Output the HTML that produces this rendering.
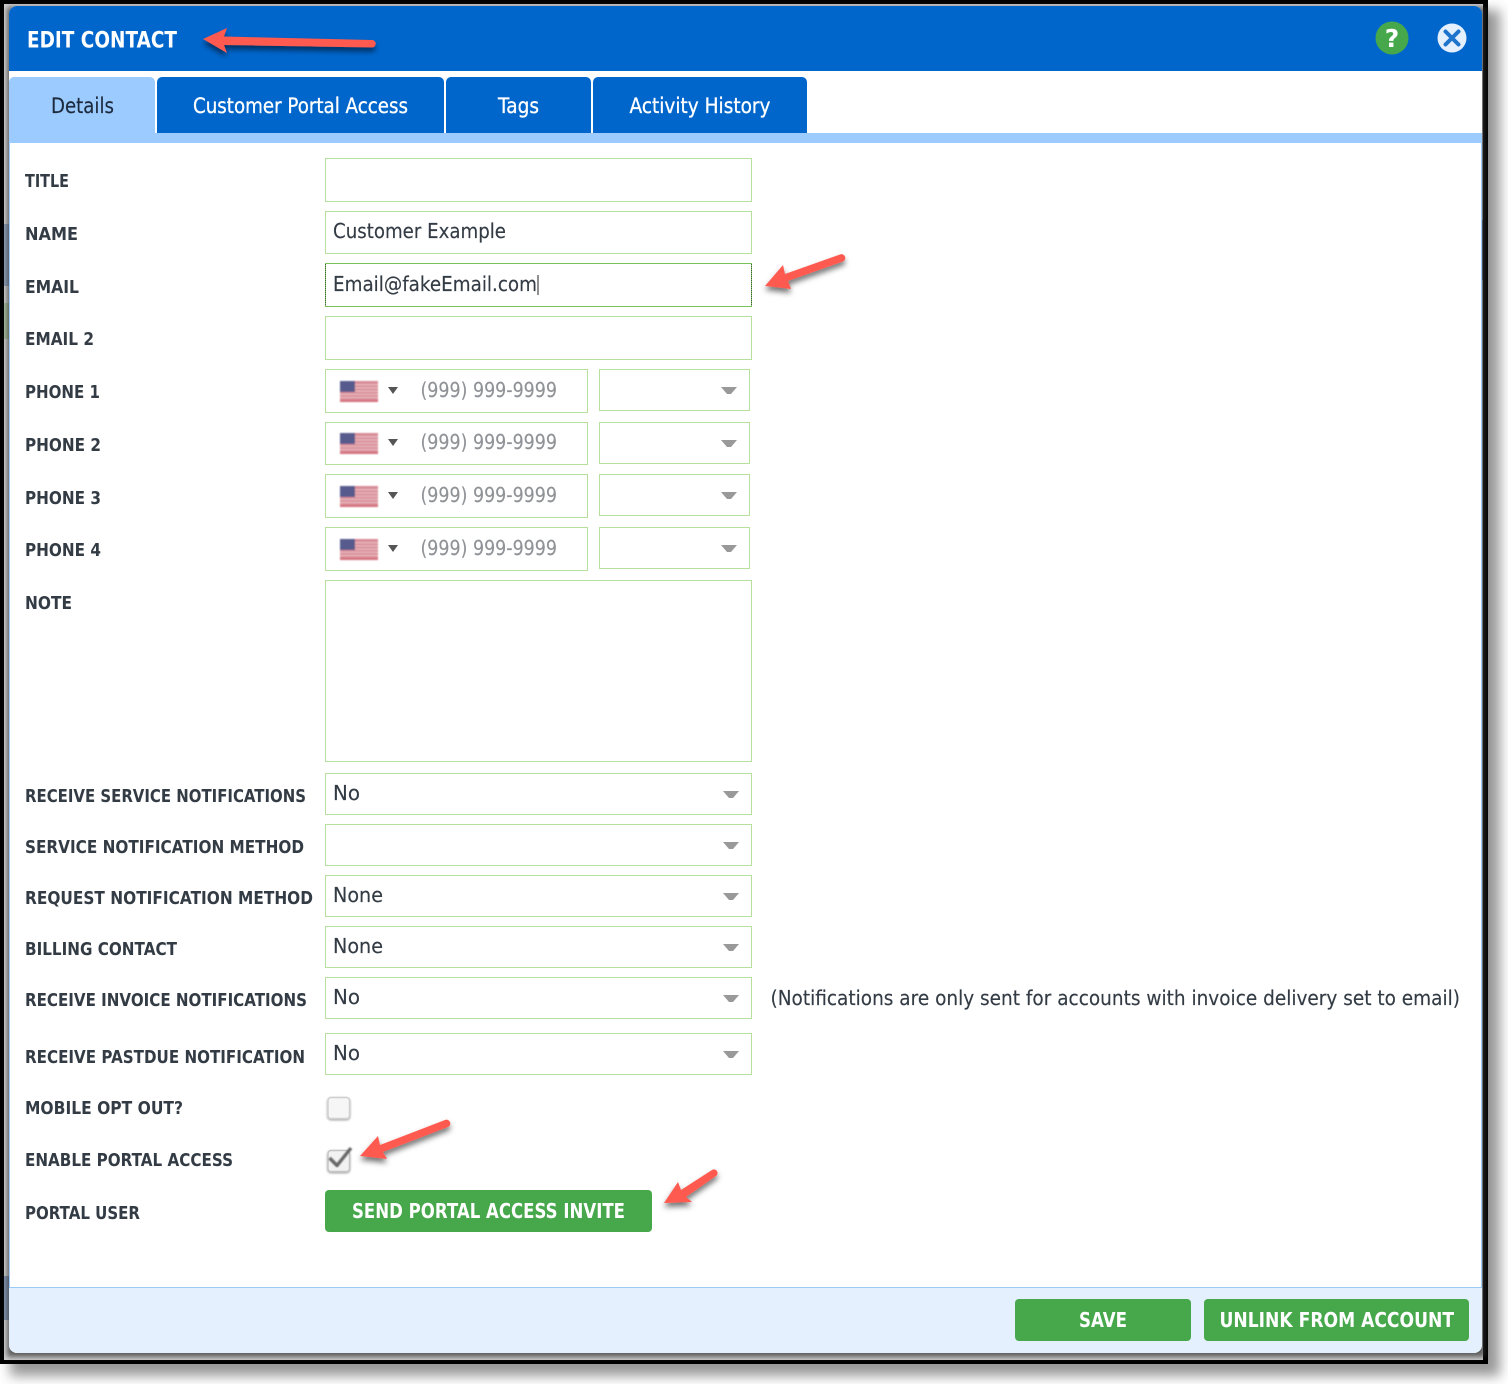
<!DOCTYPE html>
<html><head><meta charset="utf-8"><title>Edit Contact</title>
<style>
html,body{margin:0;padding:0;background:#fff;width:1508px;height:1384px;overflow:hidden}
svg{display:block}
text{font-family:"DejaVu Sans","Liberation Sans",sans-serif}
.l{font-weight:700;font-size:18px;fill:#333b44}
.b{font-weight:700;font-size:20px;fill:#fff}
.t{font-size:21px;fill:#fff;stroke:#fff;stroke-width:.3px}
.v{font-size:20px;fill:#333b44;stroke:#333b44;stroke-width:.15px}
.p{font-size:20px;fill:#8f9296;stroke:#8f9296;stroke-width:.15px}
.f{fill:#fff;stroke:#b6e09c;stroke-width:1}
.c{fill:#999}
.a{fill:#ff5a4f;filter:url(#as)}
</style></head><body>
<svg width="1508" height="1384" viewBox="0 0 1508 1384" xmlns="http://www.w3.org/2000/svg">
<defs>
<filter id="fs" x="-5%" y="-5%" width="110%" height="110%"><feGaussianBlur stdDeviation="6"/></filter>
<filter id="ds" x="-5%" y="-5%" width="110%" height="110%"><feGaussianBlur stdDeviation="3"/></filter>
<filter id="as" x="-30%" y="-60%" width="160%" height="260%"><feDropShadow dx="0" dy="4" stdDeviation="3" flood-color="#000" flood-opacity=".55"/></filter>
<filter id="sb" x="-10%" y="-10%" width="120%" height="120%"><feGaussianBlur stdDeviation=".7"/></filter>
<filter id="cb" x="-20%" y="-20%" width="140%" height="140%"><feDropShadow dx="0" dy="1" stdDeviation="1" flood-color="#000" flood-opacity=".4"/></filter>
<g id="flag" filter="url(#sb)">
<rect width="38" height="21" fill="#d88a95"/>
<rect y="3" width="38" height="1.5" fill="#e8b8bd"/><rect y="6.2" width="38" height="1.5" fill="#e8b8bd"/><rect y="9.4" width="38" height="1.5" fill="#e8b8bd"/><rect y="12.6" width="38" height="1.5" fill="#e8b8bd"/><rect y="15.8" width="38" height="1.5" fill="#e8b8bd"/>
<rect y="19" width="38" height="2" fill="#d56f7c"/>
<rect width="15" height="11" fill="#565a8c"/>
</g>
<path id="car" class="c" d="M0 0H16L10 7H6Z"/>
<path id="sc" fill="#555" d="M0 0H10L5 7Z"/>
</defs>

<!-- outer frame -->
<rect x="10" y="10" width="1490" height="1366" fill="#555" opacity=".6" filter="url(#fs)"/>
<rect x="0" y="0" width="1488" height="1364" fill="#000"/>
<rect x="4" y="4" width="1479" height="1356" fill="#d2d2d2"/>
<rect x="4" y="224" width="5" height="62" fill="#8fa2bd"/>
<rect x="4" y="303" width="5" height="36" fill="#a8c0a0"/>
<rect x="4" y="1276" width="5" height="44" fill="#8397b4"/>
<rect x="1482" y="220" width="1" height="60" fill="#7d8ba0"/>
<rect x="7" y="7" width="1478" height="1350" fill="#333" opacity=".75" filter="url(#ds)"/>

<!-- dialog -->
<path d="M17 6H1474a8 8 0 0 1 8 8V1345a8 8 0 0 1-8 8H17a8 8 0 0 1-8-8V14a8 8 0 0 1 8-8Z" fill="#fff"/>
<path d="M17 6H1474a8 8 0 0 1 8 8V71H9V14a8 8 0 0 1 8-8Z" fill="#0066cc"/>
<rect x="9" y="143" width="1" height="1144" fill="#9ccbff"/>
<rect x="1481" y="143" width="1" height="1144" fill="#9ccbff"/>
<text x="27" y="47.5" class="b" style="font-size:22px" textLength="150" lengthAdjust="spacingAndGlyphs">EDIT CONTACT</text>

<circle cx="1392" cy="38" r="16.5" fill="#46a84b"/>
<text x="1392" y="47" text-anchor="middle" style="font-size:25px;font-weight:700;fill:#fff">?</text>
<circle cx="1452" cy="38" r="14.5" fill="#e4f0fd"/>
<path d="M1445.5 31.5L1458.5 44.5M1458.5 31.5L1445.5 44.5" stroke="#1f74cc" stroke-width="4" stroke-linecap="round"/>

<!-- tabs -->
<rect x="9" y="133" width="1473" height="10" fill="#9ccbff"/>
<path d="M9 133V82a5 5 0 0 1 5-5H150a5 5 0 0 1 5 5V133Z" fill="#9ccbff"/>
<path d="M157 133V82a5 5 0 0 1 5-5H439a5 5 0 0 1 5 5V133Z" fill="#0066cc"/>
<path d="M446 133V82a5 5 0 0 1 5-5H586a5 5 0 0 1 5 5V133Z" fill="#0066cc"/>
<path d="M593 133V82a5 5 0 0 1 5-5H802a5 5 0 0 1 5 5V133Z" fill="#0066cc"/>
<text x="51" y="113" class="t" textLength="63" lengthAdjust="spacingAndGlyphs" style="fill:#1c2a3c;stroke:#1c2a3c;stroke-width:.15px">Details</text>
<text x="193" y="113" class="t" textLength="215" lengthAdjust="spacingAndGlyphs">Customer Portal Access</text>
<text x="498" y="113" class="t" textLength="41" lengthAdjust="spacingAndGlyphs">Tags</text>
<text x="629.5" y="113" class="t" textLength="141" lengthAdjust="spacingAndGlyphs">Activity History</text>

<!-- labels -->
<text x="25" y="187" class="l" textLength="44" lengthAdjust="spacingAndGlyphs">TITLE</text>
<text x="25" y="240" class="l" textLength="53" lengthAdjust="spacingAndGlyphs">NAME</text>
<text x="25" y="293" class="l" textLength="54" lengthAdjust="spacingAndGlyphs">EMAIL</text>
<text x="25" y="345" class="l" textLength="69" lengthAdjust="spacingAndGlyphs">EMAIL 2</text>
<text x="25" y="398" class="l" textLength="75" lengthAdjust="spacingAndGlyphs">PHONE 1</text>
<text x="25" y="451" class="l" textLength="76" lengthAdjust="spacingAndGlyphs">PHONE 2</text>
<text x="25" y="504" class="l" textLength="76" lengthAdjust="spacingAndGlyphs">PHONE 3</text>
<text x="25" y="556" class="l" textLength="76" lengthAdjust="spacingAndGlyphs">PHONE 4</text>
<text x="25" y="609" class="l" textLength="47" lengthAdjust="spacingAndGlyphs">NOTE</text>
<text x="25" y="802" class="l" textLength="281" lengthAdjust="spacingAndGlyphs">RECEIVE SERVICE NOTIFICATIONS</text>
<text x="25" y="853" class="l" textLength="279" lengthAdjust="spacingAndGlyphs">SERVICE NOTIFICATION METHOD</text>
<text x="25" y="904" class="l" textLength="288" lengthAdjust="spacingAndGlyphs">REQUEST NOTIFICATION METHOD</text>
<text x="25" y="955" class="l" textLength="152" lengthAdjust="spacingAndGlyphs">BILLING CONTACT</text>
<text x="25" y="1006" class="l" textLength="282" lengthAdjust="spacingAndGlyphs">RECEIVE INVOICE NOTIFICATIONS</text>
<text x="25" y="1063" class="l" textLength="280" lengthAdjust="spacingAndGlyphs">RECEIVE PASTDUE NOTIFICATION</text>
<text x="25" y="1114" class="l" textLength="158" lengthAdjust="spacingAndGlyphs">MOBILE OPT OUT?</text>
<text x="25" y="1166" class="l" textLength="208" lengthAdjust="spacingAndGlyphs">ENABLE PORTAL ACCESS</text>
<text x="25" y="1219" class="l" textLength="115" lengthAdjust="spacingAndGlyphs">PORTAL USER</text>

<!-- inputs -->
<rect class="f" x="325.5" y="158.5" width="426" height="43"/>
<rect class="f" x="325.5" y="211.5" width="426" height="42"/>
<text x="333" y="238" class="v" textLength="173" lengthAdjust="spacingAndGlyphs">Customer Example</text>
<rect x="325.5" y="263.5" width="426" height="43" fill="#fff" stroke="#79c257"/>
<path d="M325.5 264V306M751.5 264V306" stroke="#333" stroke-dasharray="1 1" fill="none" opacity=".7"/>
<text x="333" y="291" class="v" textLength="204" lengthAdjust="spacingAndGlyphs">Email@fakeEmail.com</text>
<rect x="537.5" y="275" width="1" height="20" fill="#222"/>
<rect class="f" x="325.5" y="316.5" width="426" height="43"/>

<!-- phones -->
<rect class="f" x="325.5" y="369.5" width="262" height="43"/>
<use href="#flag" x="340" y="381"/><use href="#sc" x="388" y="387"/>
<text x="420.5" y="397" class="p" textLength="136.5" lengthAdjust="spacingAndGlyphs">(999) 999-9999</text>
<rect class="f" x="599.5" y="369.5" width="150" height="41"/><use href="#car" x="721" y="387"/>

<rect class="f" x="325.5" y="422.5" width="262" height="42"/>
<use href="#flag" x="340" y="433"/><use href="#sc" x="388" y="439"/>
<text x="420.5" y="449" class="p" textLength="136.5" lengthAdjust="spacingAndGlyphs">(999) 999-9999</text>
<rect class="f" x="599.5" y="422.5" width="150" height="41"/><use href="#car" x="721" y="440"/>

<rect class="f" x="325.5" y="474.5" width="262" height="43"/>
<use href="#flag" x="340" y="486"/><use href="#sc" x="388" y="492"/>
<text x="420.5" y="502" class="p" textLength="136.5" lengthAdjust="spacingAndGlyphs">(999) 999-9999</text>
<rect class="f" x="599.5" y="474.5" width="150" height="41"/><use href="#car" x="721" y="492"/>

<rect class="f" x="325.5" y="527.5" width="262" height="43"/>
<use href="#flag" x="340" y="539"/><use href="#sc" x="388" y="545"/>
<text x="420.5" y="555" class="p" textLength="136.5" lengthAdjust="spacingAndGlyphs">(999) 999-9999</text>
<rect class="f" x="599.5" y="527.5" width="150" height="41"/><use href="#car" x="721" y="545"/>

<!-- note -->
<rect class="f" x="325.5" y="580.5" width="426" height="181"/>

<!-- selects -->
<rect class="f" x="325.5" y="773.5" width="426" height="41"/><use href="#car" x="723" y="791"/>
<text x="333" y="800" class="v" textLength="27" lengthAdjust="spacingAndGlyphs">No</text>
<rect class="f" x="325.5" y="824.5" width="426" height="41"/><use href="#car" x="723" y="842"/>
<rect class="f" x="325.5" y="875.5" width="426" height="41"/><use href="#car" x="723" y="893"/>
<text x="333" y="902" class="v" textLength="50" lengthAdjust="spacingAndGlyphs">None</text>
<rect class="f" x="325.5" y="926.5" width="426" height="41"/><use href="#car" x="723" y="944"/>
<text x="333" y="953" class="v" textLength="50" lengthAdjust="spacingAndGlyphs">None</text>
<rect class="f" x="325.5" y="977.5" width="426" height="41"/><use href="#car" x="723" y="995"/>
<text x="333" y="1004" class="v" textLength="27" lengthAdjust="spacingAndGlyphs">No</text>
<text x="770.5" y="1005" class="v" textLength="689.5" lengthAdjust="spacingAndGlyphs">(Notifications are only sent for accounts with invoice delivery set to email)</text>
<rect class="f" x="325.5" y="1033.5" width="426" height="41"/><use href="#car" x="723" y="1051"/>
<text x="333" y="1060" class="v" textLength="27" lengthAdjust="spacingAndGlyphs">No</text>

<!-- checkboxes -->
<rect x="328" y="1097.5" width="21.5" height="21" rx="3" fill="#f6f6f6" stroke="#d0d0d0" stroke-width="1.5" filter="url(#cb)"/>
<rect x="328" y="1150.5" width="21.5" height="21" rx="3" fill="#f2f2f2" stroke="#c4c4c4" stroke-width="1.5" filter="url(#cb)"/>
<path d="M329.5 1158L337 1165.5L351 1148" fill="none" stroke="#666" stroke-width="3.4" filter="url(#sb)"/>

<!-- buttons -->
<rect x="325" y="1190" width="327" height="42" rx="4" fill="#46a84b"/>
<text x="352" y="1218" class="b" textLength="273" lengthAdjust="spacingAndGlyphs">SEND PORTAL ACCESS INVITE</text>

<!-- footer -->
<path d="M9 1287H1482V1345a8 8 0 0 1-8 8H17a8 8 0 0 1-8-8Z" fill="#e4f0fd"/>
<rect x="9" y="1287" width="1473" height="1" fill="#9ccbf5"/>
<rect x="1015" y="1299" width="176" height="42" rx="4" fill="#46a84b"/>
<text x="1079" y="1327" class="b" textLength="48" lengthAdjust="spacingAndGlyphs">SAVE</text>
<rect x="1204" y="1299" width="265" height="42" rx="4" fill="#46a84b"/>
<text x="1219.5" y="1327" class="b" textLength="234.5" lengthAdjust="spacingAndGlyphs">UNLINK FROM ACCOUNT</text>

<!-- annotation arrows -->
<path class="a" d="M203 39L227 28L224 36.5L372 40a3.7 3.7 0 0 1 0 7.5L224 45L227 53Z"/>
<path class="a" d="M765 286L783 265L785 274L840 254.5a3.7 3.7 0 0 1 3 7L788 281L791 289Z"/>
<path class="a" d="M360 1156L378 1136L380 1145L445 1120a3.7 3.7 0 0 1 3 7L383 1152L387 1159Z"/>
<path class="a" d="M664 1203L678 1182L681 1190L712 1170a3.5 3.5 0 0 1 4 6L686 1197L692 1202Z"/>
</svg>
</body></html>
